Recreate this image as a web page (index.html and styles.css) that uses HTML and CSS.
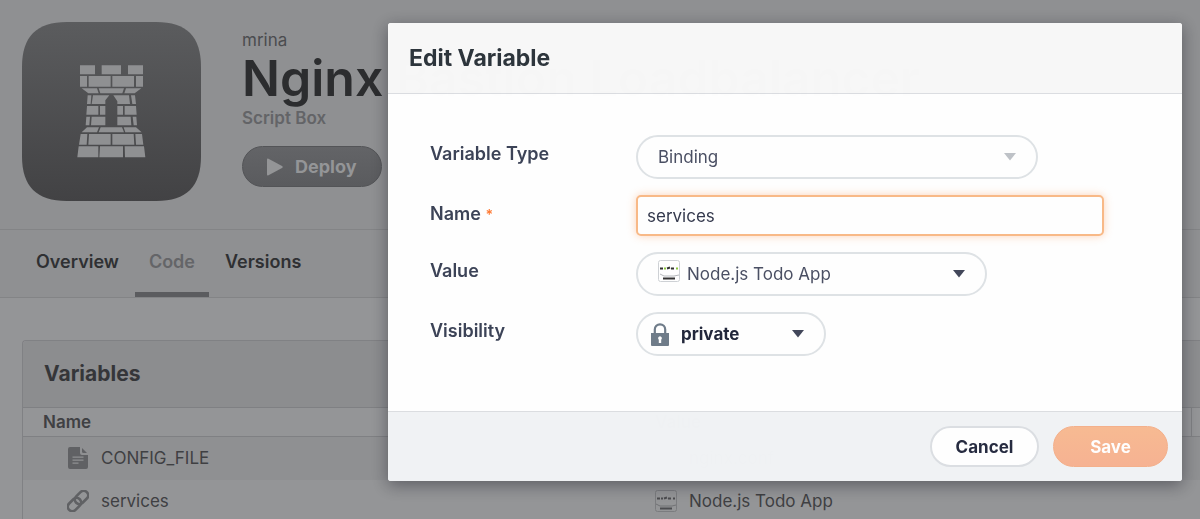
FILE: index.html
```html
<!DOCTYPE html>
<html lang="en">
<head>
<meta charset="utf-8">
<title>Edit Variable</title>
<link rel="stylesheet" href="styles.css">
</head>
<body>
<svg class="defs" aria-hidden="true">
  <symbol id="caret" viewBox="0 0 12 8"><path d="M0 0h12L6 7.500z" fill="currentColor"/></symbol>
  <symbol id="file" viewBox="0 0 20 22"><path fill="currentColor" fill-rule="evenodd" d="M2 0h10v6q0 2 2 2h6v12q0 2-2 2H2q-2 0-2-2V2q0-2 2-2zM4.500 9.500v1.300h11V9.500zm0 3v1.300h11v-1.300zm0 3v1.300h6v-1.300z"/><path fill="currentColor" d="M14 1l5 5h-3.500Q14 6 14 4.500z"/></symbol>
</svg>
<header class="app">
  <svg class="app-icon" viewBox="66 66 537 537" aria-hidden="true">
    <defs><linearGradient id="tile" x1="0" y1="0" x2="0" y2="1"><stop offset="0" stop-color="#5b5c5e"/><stop offset="1" stop-color="#424244"/></linearGradient></defs>
    <path fill="url(#tile)" d="M200 66H469C560 66 603 110 603 200V469C603 560 560 603 469 603H200C110 603 66 560 66 469V200C66 110 110 66 200 66z"/>
    <g fill="#8f9092">
      <path d="M240 196h45v27h-45zM305 196h58v27h-58zM384 196h45v27h-45z"/>
      <path d="M240 228h21v32h-21zM266 228h66v32h-66zM337 228h65v32h-65zM408 228h21v32h-21z"/>
      <path d="M245 265h46l5 15h-31zM296 265h76l-5 15h-66zM378 265h46l-20 15h-31z"/>
      <path d="M263 286h11l-2 26h-11zM279 286h49l-12 15v11h-41zM340 286h47l3 26h-38v-8zM393 286h12l3 26h-11z"/>
      <path d="M261 318h34v26h-36zM300 318h16v26h-16zM352 318h17v26h-17zM374 318h34l2 26h-36z"/>
      <path d="M259 350h11l-2 26h-11zM275 350h41v26h-43zM352 350h40l2 26h-42zM398 350h11l2 26h-10z"/>
      <path d="M261 382h36l-6 15h-46zM302 382h64l6 15h-76zM371 382h37l17 15h-49z"/>
      <path d="M242 402h20l-2 32h-23zM267 402h65v32h-67zM337 402h64l2 32h-66zM406 402h20l4 32h-22z"/>
      <path d="M236 439h59v33h-63zM300 439h69v33h-71zM374 439h58l4 33h-61z"/>
    </g>
  </svg>
  <div class="app-info">
    <div class="owner">mrina</div>
    <h1>Nginx Bastion Loadbalancer</h1>
    <div class="kind">Script Box</div>
    <button class="deploy" type="button"><svg viewBox="0 0 16 18" width="16" height="18" aria-hidden="true"><path d="M0 1.500Q0 0 1.500.7L15 8q1.500 1 0 2L1.500 17.300Q0 18 0 16.500z" fill="currentColor"/></svg>Deploy</button>
  </div>
</header>
<nav class="tabs">
  <a href="#overview">Overview</a>
  <a href="#code" class="active">Code</a>
  <a href="#versions">Versions</a>
</nav>
<main>
  <section class="panel">
    <h2>Variables</h2>
    <table>
      <colgroup><col class="col-name"><col><col class="col-end"></colgroup>
      <thead><tr><th>Name</th><th>Value</th><th></th></tr></thead>
      <tbody>
        <tr>
          <td class="name"><div class="cell"><svg class="glyph" aria-hidden="true"><use href="#file"/></svg>CONFIG_FILE</div></td>
          <td><div class="cell"><svg class="glyph" aria-hidden="true"><use href="#file"/></svg>nginx.conf</div></td>
          <td></td>
        </tr>
        <tr>
          <td class="name"><div class="cell"><svg class="glyph" viewBox="0 0 22 22" aria-hidden="true"><g transform="rotate(-45 11 11)" fill="none" stroke="currentColor" stroke-width="2.600"><rect x="-1.500" y="6.500" width="15" height="9" rx="4.500"/><rect x="8.500" y="6.500" width="15" height="9" rx="4.500"/></g></svg>services</div></td>
          <td><div class="cell"><svg class="glyph box" viewBox="0 0 22 22" aria-hidden="true"><rect x=".5" y=".5" width="21" height="21" rx="2" fill="none" stroke="#7b7c7f"/><path d="M2 8.500h3M6 8.500h2M9 8.500l3-1M13 8.500h3M18 8.500h2" stroke="#4c4d50" stroke-width="2"/><path d="M1 14l4 2h12l4-1" fill="none" stroke="#717275"/><path d="M5 18.500h12" stroke="#4c4d50" stroke-width="2"/></svg>Node.js Todo App</div></td>
          <td></td>
        </tr>
      </tbody>
    </table>
  </section>
</main>
<div class="overlay">
  <form class="modal" role="dialog" aria-labelledby="dialog-title">
    <header class="modal-head"><h2 id="dialog-title">Edit Variable</h2></header>
    <div class="fields">
      <label for="type">Variable Type</label>
      <div class="pick type"><select id="type"><option>Binding</option></select><svg class="caret" aria-hidden="true"><use href="#caret"/></svg></div>
      <label for="name">Name <span class="required">*</span></label>
      <input id="name" type="text" value="services">
      <label for="value">Value</label>
      <div class="pick value"><svg class="lead" viewBox="0 0 22 22" aria-hidden="true"><rect x=".5" y=".5" width="21" height="21" rx="2" fill="#fff" stroke="#cfd2d6"/><path d="M2 8.500h3M9 8.500l3-1M13 8.500h3" stroke="#333" stroke-width="2"/><path d="M6 8.500h2M18 8.500h2" stroke="#8cc83c" stroke-width="2"/><path d="M2 14l4 2h10l5-1" fill="none" stroke="#b5b8bc"/><path d="M5 18.500h12" stroke="#333" stroke-width="2"/></svg><select id="value"><option>Node.js Todo App</option></select><svg class="caret" aria-hidden="true"><use href="#caret"/></svg></div>
      <label for="visibility">Visibility</label>
      <div class="pick visibility"><svg class="lead" viewBox="0 0 18 23" aria-hidden="true"><path d="M3.800 11V6.500a5.200 5.200 0 0 1 10.400 0V11" fill="none" stroke="#6f7c8a" stroke-width="2.200"/><path d="M0 10h18v12q0 1-1 1H1q-1 0-1-1z" fill="#6f7c8a"/><path d="M9 13.200a2 2 0 0 1 1.200 3.500V20H7.800v-3.300A2 2 0 0 1 9 13.200z" fill="#fff"/></svg><select id="visibility"><option>private</option></select><svg class="caret" aria-hidden="true"><use href="#caret"/></svg></div>
    </div>
    <footer class="modal-foot"><button class="cancel" type="button">Cancel</button><button class="save" type="submit">Save</button></footer>
  </form>
</div>
</body>
</html>
```
FILE: styles.css
```css
* { box-sizing: border-box; }
html { height: 100%; overflow: hidden; }
body {
  margin: 0;
  height: 100%;
  overflow: hidden;
  background: #949597;
  color: #3f4043;
  font: 17px/24px Inter, "Liberation Sans", sans-serif;
}
h1, h2 { margin: 0; }
button, input, select { font: inherit; }
.defs { display: none; }

.app {
  display: flex;
  gap: 41px;
  padding: 22px 22px 28px;
  background: #8f9092;
  border-top: 1px solid #88898b;
  border-bottom: 1px solid #838486;
  margin-top: -1px;
}
.app-icon { width: 179px; height: 179px; flex: none; }
.app-info { padding-top: 6px; }
.owner { color: #4b4c4f; }
h1 { font-size: 50px; line-height: 52px; font-weight: 600; color: #2c2d2f; white-space: nowrap; }
.kind { color: #636467; font-weight: 600; line-height: 28px; margin-bottom: 14px; }
.deploy {
  display: flex;
  align-items: center;
  gap: 12px;
  height: 41px;
  padding: 0 24px;
  border: 1px solid #535457;
  border-radius: 21px;
  background: linear-gradient(#636467, #5a5b5e);
  color: #949597;
  font-size: 18px;
  font-weight: 700;
}

.tabs { display: flex; gap: 2px; padding-left: 22px; background: #8f9092; border-bottom: 1px solid #838486; }
.tabs a {
  padding: 20px 14px 18px;
  border-bottom: 5px solid transparent;
  color: #2f3033;
  font-size: 18px;
  font-weight: 600;
  text-decoration: none;
}
.tabs .active { color: #646568; border-bottom-color: #5b5c5f; }

main { padding: 42px 0 0 22px; }
.panel { border: 1px solid #808184; border-right: 0; border-radius: 4px 0 0 0; background: #949597; }
.panel h2 {
  padding: 21px 21px;
  background: #8c8d8f;
  border-radius: 4px 0 0 0;
  font-size: 21px;
  line-height: 24px;
  color: #353639;
}
table { width: 100%; table-layout: fixed; border-collapse: collapse; }
.col-name { width: 52%; }
.col-end { width: 9px; }
th {
  height: 29px;
  padding: 0 20px;
  border: solid #7f8083;
  border-width: 1px 0;
  text-align: left;
  font-weight: 600;
}
th:last-child { padding: 0; border-left-width: 1px; }
td { height: 43px; padding: 0 20px; }
td:last-child { padding: 0; }
td.name { padding-left: 44px; }
tbody tr:first-child { background: #8f9092; }
.cell { display: flex; align-items: center; gap: 12px; white-space: nowrap; }
.glyph { width: 22px; height: 22px; color: #606164; }

.overlay { position: fixed; inset: 0; padding: 23px 18px 39px 388px; }
.modal {
  background: #fff;
  border-radius: 3px;
  box-shadow: 0 4px 16px rgba(40, 40, 50, .5);
  color: #3c4357;
  opacity: .992;
  overflow: hidden;
}
.modal-head { padding: 22px 21px; background: #f8f8f8; border-bottom: 1px solid #dcdee2; }
.modal-head h2 { font-size: 23px; line-height: 26px; color: #2d353c; }
.fields {
  display: grid;
  grid-template-columns: 206px minmax(0, 1fr);
  row-gap: 16px;
  padding: 41px 78px 55px 42px;
}
.fields label { font-size: 18px; font-weight: 600; line-height: 38px; }
.required { color: #ff7a33; font-size: 14px; }
.fields input {
  width: 100%;
  height: 41px;
  padding: 0 9px;
  border: 2px solid #f9ba88;
  border-radius: 5px;
  outline: 0;
  box-shadow: 0 0 8px rgba(250, 160, 100, .45);
  color: #34394d;
}
.pick { position: relative; height: 44px; }
.pick select {
  width: 100%;
  height: 100%;
  padding: 0 20px;
  appearance: none;
  border: 2px solid #dfe3e6;
  border-radius: 22px;
  background: #fff;
  color: #4a4f63;
}
.caret { position: absolute; right: 22px; top: 18px; width: 12px; height: 8px; color: #42475a; pointer-events: none; }
.lead { position: absolute; }
.type { width: 86%; }
.type .caret { color: #bfc3c8; }
.value { width: 75%; }
.value select { padding-left: 49px; }
.value .lead { left: 22px; top: 8px; width: 22px; height: 22px; }
.visibility { width: 190px; }
.visibility select { padding-left: 43px; color: #22273b; font-weight: 700; }
.visibility .lead { left: 15px; top: 11px; width: 18px; height: 23px; }

.modal-foot {
  display: flex;
  justify-content: flex-end;
  gap: 14px;
  padding: 14px;
  background: #f1f3f5;
  border-top: 1px solid #dcdee1;
}
.modal-foot button { height: 41px; border-radius: 21px; font-weight: 700; }
.cancel { width: 109px; border: 2px solid #dcdfe3; background: #fff; color: #262b40; }
.save { width: 115px; border: 1px solid #f5b18c; background: linear-gradient(#f8bb93, #f7b393); color: #fff; }
```
